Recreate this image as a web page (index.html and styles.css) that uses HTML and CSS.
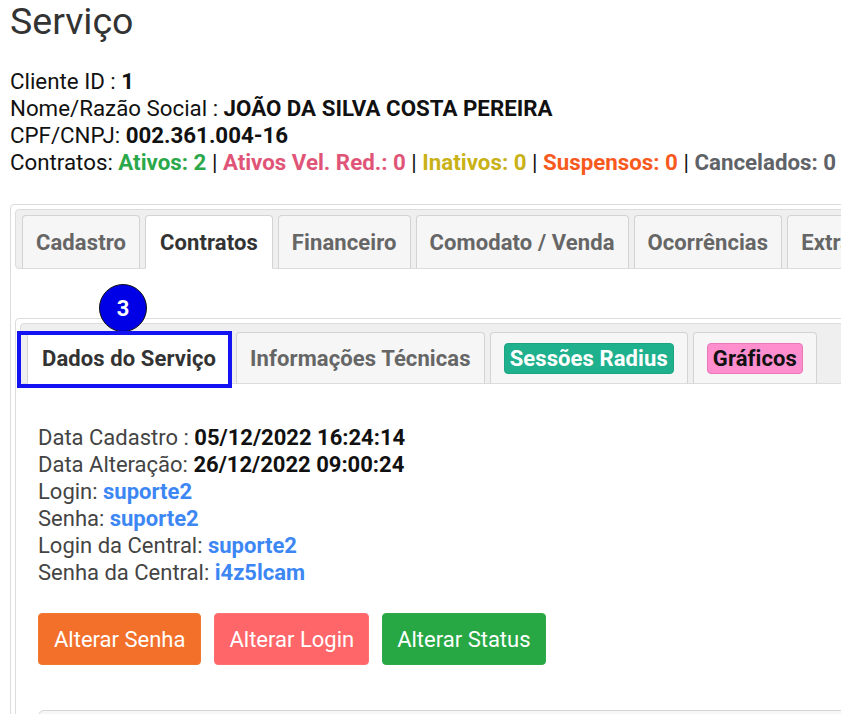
FILE: index.html
```html
<!DOCTYPE html>
<html lang="pt-BR">
<head>
<meta charset="utf-8">
<title>Serviço</title>
<link rel="stylesheet" href="styles.css">
</head>
<body>
<div class="page">
  <h1 class="title">Serviço</h1>
  <div class="info">
    <div>Cliente ID : <b>1</b></div>
    <div>Nome/Razão Social : <b>JOÃO DA SILVA COSTA PEREIRA</b></div>
    <div>CPF/CNPJ: <b>002.361.004-16</b></div>
    <div>Contratos: <b class="c-green">Ativos: 2</b> | <b class="c-pink">Ativos Vel. Red.: 0</b> | <b class="c-yellow">Inativos: 0</b> | <b class="c-orange">Suspensos: 0</b> | <b class="c-gray">Cancelados: 0</b></div>
  </div>

  <div class="widget outer">
    <ul class="tab-nav">
      <li class="tab">Cadastro</li>
      <li class="tab active">Contratos</li>
      <li class="tab">Financeiro</li>
      <li class="tab">Comodato / Venda</li>
      <li class="tab">Ocorrências</li>
      <li class="tab">Extrato</li>
    </ul>
    <div class="outer-panel">
      <div class="widget inner">
        <ul class="tab-nav inner-nav">
          <li class="tab active">Dados do Serviço</li>
          <li class="tab">Informações Técnicas</li>
          <li class="tab"><span class="label label-teal">Sessões Radius</span></li>
          <li class="tab"><span class="label label-pink">Gráficos</span></li>
        </ul>
        <div class="inner-panel">
          <div class="details">
            <div>Data Cadastro : <b>05/12/2022 16:24:14</b></div>
            <div>Data Alteração: <b>26/12/2022 09:00:24</b></div>
            <div>Login: <b class="c-blue">suporte2</b></div>
            <div>Senha: <b class="c-blue">suporte2</b></div>
            <div>Login da Central: <b class="c-blue">suporte2</b></div>
            <div>Senha da Central: <b class="c-blue">i4z5lcam</b></div>
          </div>
          <div class="actions">
            <button class="btn btn-orange">Alterar Senha</button>
            <button class="btn btn-red">Alterar Login</button>
            <button class="btn btn-green">Alterar Status</button>
          </div>
          <div class="sub-panel"></div>
        </div>
      </div>
    </div>
  </div>

  <div class="step-badge">3</div>
  <div class="highlight-box"></div>
</div>
</body>
</html>
```

FILE: styles.css
```css
html, body {
  margin: 0;
  padding: 0;
  background: #fff;
  overflow: hidden;
}
body {
  font-family: Roboto, "Liberation Sans", Arial, sans-serif;
  font-size: 22px;
  color: #111;
}
.page {
  position: relative;
  padding: 0 0 0 10px;
  width: 1200px;
}
.title {
  margin: 0;
  font-size: 37.5px;
  font-weight: 400;
  line-height: 42px;
  color: #333;
}
.info {
  margin-top: 26px;
  font-size: 22.3px;
  line-height: 27px;
}
.info b, .details b {
  font-weight: 700;
}
.c-green { color: #2ba84a; }
.c-pink { color: #e05577; }
.c-yellow { color: #c9b118; }
.c-orange { color: #f85a1e; }
.c-gray { color: #5f6368; }
.c-blue { color: #3d87f5; }

.widget {
  border: 1px solid #dcdcdc;
  border-radius: 4px;
  padding: 4px;
  background: #fff;
}
.outer {
  margin-top: 28px;
}
.tab-nav {
  list-style: none;
  margin: 0;
  padding: 5px 6px 0;
  display: flex;
  gap: 5px;
  background: #efefef;
  border: 1px solid #dcdcdc;
  border-radius: 4px;
}
.tab {
  flex: none;
  margin-bottom: -1px;
  padding: 0 13px;
  height: 52px;
  display: flex;
  align-items: center;
  border: 1px solid #d3d3d3;
  border-bottom: 1px solid #dcdcdc;
  border-radius: 4px 4px 0 0;
  background: #f6f6f6;
  color: #666;
  font-weight: 700;
  white-space: nowrap;
  letter-spacing: 0.1px;
}
.tab.active {
  background: #fff;
  color: #333;
  border-bottom-color: #fff;
  padding: 0 14px;
}
.outer-panel {
  padding: 49px 0 0;
}
.inner-nav {
  padding-top: 8px;
}
.inner-nav .tab {
  height: 50px;
}
.label {
  display: inline-block;
  padding: 0 5px;
  line-height: 29px;
  border-radius: 4px;
  border: 1px solid transparent;
}
.label-teal {
  background: #1fb18e;
  border-color: #1aa583;
  color: #fff;
}
.label-pink {
  background: #ff8ecf;
  border-color: #ea78b6;
  color: #111;
}
.inner-panel {
  padding: 40px 18px 0;
}
.details {
  line-height: 27px;
  color: #444;
}
.details b {
  color: #111;
}
.details b.c-blue {
  color: #3d87f5;
}
.actions {
  display: flex;
  gap: 13px;
  margin-top: 27px;
}
.btn {
  font-family: inherit;
  font-size: 22px;
  color: #fff;
  border: 1px solid transparent;
  border-radius: 4px;
  height: 52px;
  padding: 0 15px;
  cursor: pointer;
}
.btn-orange { background: #f3702b; border-color: #f0782f; }
.btn-red { background: #ff6669; border-color: #ff7073; padding: 0 14px; }
.btn-green { background: #28a745; border-color: #2eaa4b; padding: 0 14px; }
.sub-panel {
  margin-top: 45px;
  height: 40px;
  border: 1px solid #d6d6d6;
  border-radius: 6px;
  background: #f7f7f7;
}

.step-badge {
  position: absolute;
  left: 99px;
  top: 284px;
  width: 46px;
  height: 46px;
  border-radius: 50%;
  background: #0000e6;
  border: 1px solid #111;
  color: #fff;
  font-weight: 700;
  font-size: 22px;
  display: flex;
  align-items: center;
  justify-content: center;
}
.highlight-box {
  position: absolute;
  left: 17px;
  top: 331px;
  width: 207px;
  height: 49px;
  border: 4px solid #1212f2;
}
```
